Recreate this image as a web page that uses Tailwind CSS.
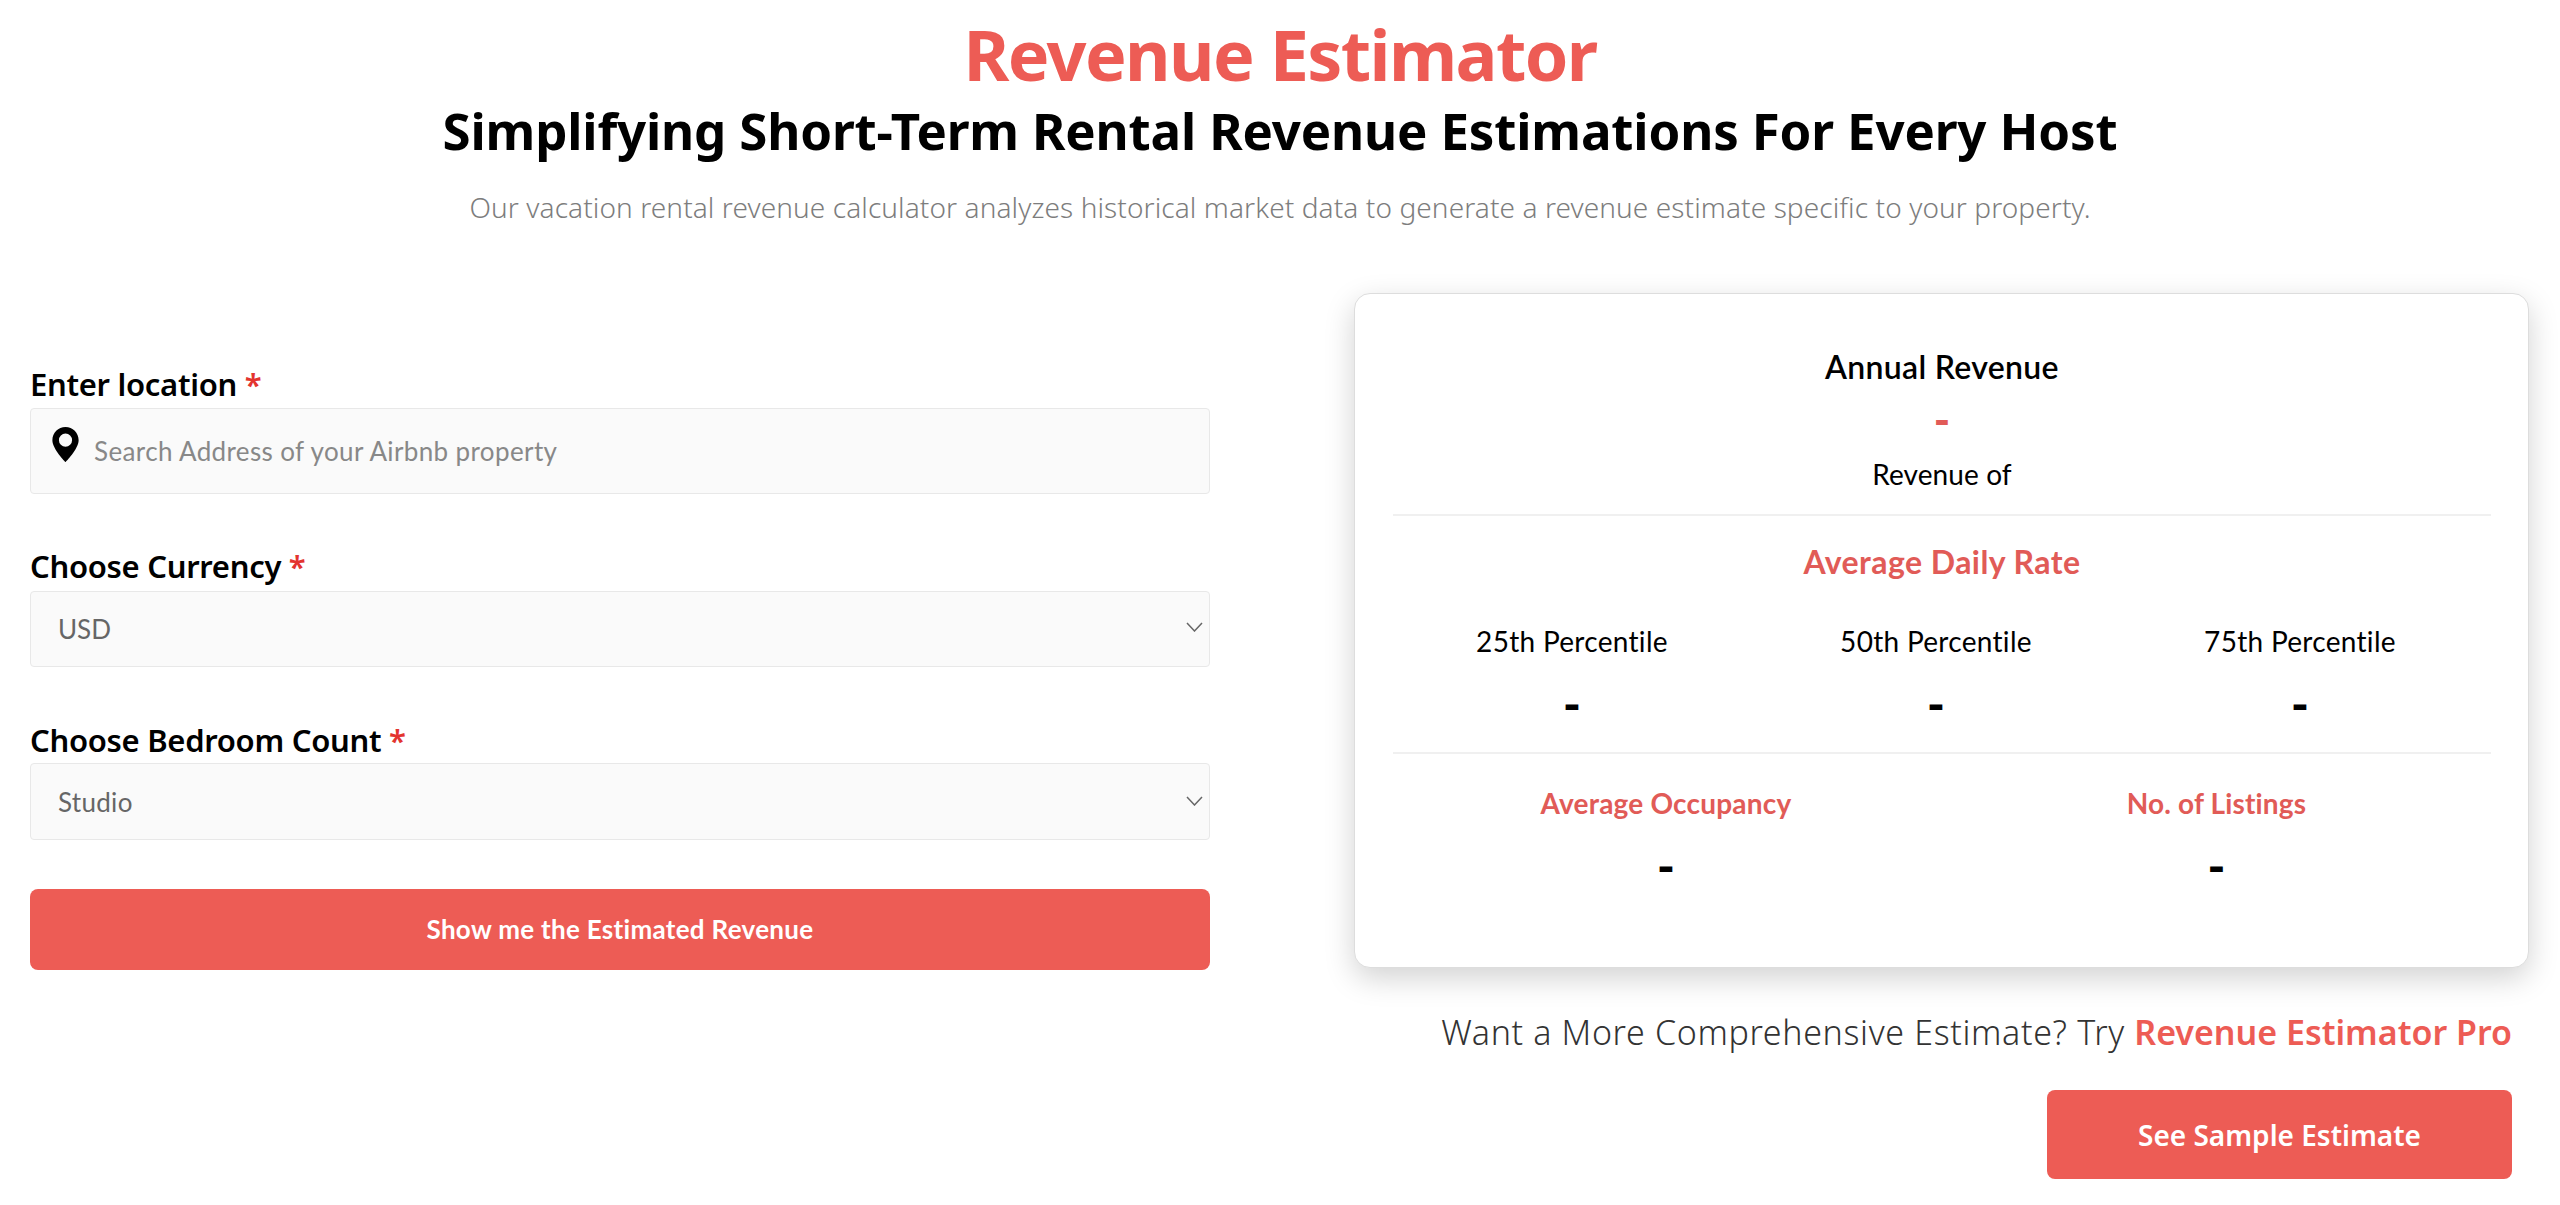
<!doctype html>
<html lang="en">
  <head>
    <meta charset="UTF-8" />
    <meta name="viewport" content="width=device-width, initial-scale=1.0" />
    <title>Revenue Estimator</title>
    <script src="https://cdn.jsdelivr.net/npm/@tailwindcss/browser@4"></script>
  </head>
  <body class="bg-white font-['Lato',sans-serif] [font-variant-ligatures:none]">
    <!-- Header -->
    <header class="pt-[18px] text-center">
      <h1 class="text-[70px] leading-[72px] tracking-[-1.6px] font-bold text-[#ed5c55] font-['Noto_Sans',sans-serif]">Revenue Estimator</h1>
      <h2 class="mt-[9px] text-[51px] leading-[62px] tracking-[-0.15px] font-bold text-black font-['Noto_Sans',sans-serif]">Simplifying Short-Term Rental Revenue Estimations For Every Host</h2>
      <p class="mt-[26px] text-[28px] leading-[40px] tracking-[0.1px] text-[#7d7d7d] font-['Noto_Sans',sans-serif] font-light">Our vacation rental revenue calculator analyzes historical market data to generate a revenue estimate specific to your property.</p>
    </header>

    <main class="mt-[66px] flex justify-between pl-[30px] pr-[31px]">
      <!-- Form -->
      <form class="w-[1180px] pt-[71px]">
        <label class="block text-[31px] leading-[40px] tracking-[-0.3px] font-semibold text-black font-['Noto_Sans',sans-serif]">Enter location <span class="text-[#e3342f]">*</span></label>
        <div class="relative mt-[4px]">
          <svg class="absolute left-[22px] top-[19px] w-[27px] h-[35px]" viewBox="0 0 24 32">
            <path fill-rule="evenodd" fill="#000" d="M12 0C5.4 0 0 5.4 0 12c0 8 12 20 12 20s12-12 12-20C24 5.4 18.6 0 12 0zm0 6a6 6 0 1 1 0 12 6 6 0 0 1 0-12z" />
          </svg>
          <input type="text" placeholder="Search Address of your Airbnb property" class="block w-full h-[86px] pl-[63px] pr-4 bg-[#fafafa] border border-[#e8e8e8] rounded-[4px] text-[26px] tracking-[0.38px] placeholder:text-[#888888]" />
        </div>

        <label class="block mt-[52px] text-[31px] leading-[40px] tracking-[-0.3px] font-semibold text-black font-['Noto_Sans',sans-serif]">Choose Currency <span class="text-[#e3342f]">*</span></label>
        <div class="relative mt-[5px]">
          <select class="block w-full h-[76px] appearance-none pl-[27px] bg-[#fafafa] border border-[#e8e8e8] rounded-[4px] text-[26px] text-[#666666]">
            <option>USD</option>
          </select>
          <svg class="absolute right-[7px] top-[31px] w-[17px] h-[10px]" viewBox="0 0 17 10" fill="none" stroke="#666" stroke-width="1.5"><path d="M1 1l7.5 8L16 1" /></svg>
        </div>

        <label class="block mt-[53px] text-[31px] leading-[40px] tracking-[-0.3px] font-semibold text-black font-['Noto_Sans',sans-serif]">Choose Bedroom Count <span class="text-[#e3342f]">*</span></label>
        <div class="relative mt-[3px]">
          <select class="block w-full h-[77px] appearance-none pt-[2px] pl-[27px] bg-[#fafafa] border border-[#e8e8e8] rounded-[4px] text-[26px] tracking-[0.3px] text-[#666666]">
            <option>Studio</option>
          </select>
          <svg class="absolute right-[7px] top-[33px] w-[17px] h-[10px]" viewBox="0 0 17 10" fill="none" stroke="#666" stroke-width="1.5"><path d="M1 1l7.5 8L16 1" /></svg>
        </div>

        <button type="button" class="block w-full h-[81px] mt-[49px] bg-[#ed5c55] rounded-[8px] text-white text-[26px] tracking-[0.3px] font-bold">Show me the Estimated Revenue</button>
      </form>

      <!-- Results -->
      <section class="w-[1175px]">
        <div class="h-[675px] pt-[51px] pl-[38px] pr-[37px] bg-white border border-[#dddddd] rounded-[16px] shadow-[0_10px_30px_rgba(0,0,0,0.18)] text-center">
          <p class="text-[32px] leading-[44px] tracking-[0.3px] font-semibold text-black">Annual Revenue</p>
          <p class="mt-[8px] text-[44px] leading-[44px] font-black text-[#e15b57]">-</p>
          <p class="mt-[13px] text-[28px] leading-[40px] tracking-[0.1px] text-black">Revenue of</p>
          <div class="mt-[20px] h-[2px] bg-[#f0f0f0]"></div>

          <p class="mt-[24px] text-[32px] leading-[44px] tracking-[0.45px] font-bold text-[#e15b57]">Average Daily Rate</p>
          <div class="mt-[37px] ml-[-3px] grid grid-cols-3 w-[1092px]">
            <div>
              <p class="text-[28px] leading-[40px] tracking-[0.3px] text-black">25th Percentile</p>
              <p class="mt-[21px] text-[48px] leading-[44px] font-black text-black">-</p>
            </div>
            <div>
              <p class="text-[28px] leading-[40px] tracking-[0.3px] text-black">50th Percentile</p>
              <p class="mt-[21px] text-[48px] leading-[44px] font-black text-black">-</p>
            </div>
            <div>
              <p class="text-[28px] leading-[40px] tracking-[0.3px] text-black">75th Percentile</p>
              <p class="mt-[21px] text-[48px] leading-[44px] font-black text-black">-</p>
            </div>
          </div>
          <div class="mt-[26px] h-[2px] bg-[#f0f0f0]"></div>

          <div class="mt-[29px] grid grid-cols-2">
            <div class="pr-[3px]">
              <p class="text-[28px] leading-[40px] tracking-[0.2px] font-bold text-[#e15b57]">Average Occupancy</p>
              <p class="mt-[21px] text-[48px] leading-[44px] font-black text-black">-</p>
            </div>
            <div>
              <p class="text-[28px] leading-[40px] tracking-[0.15px] font-bold text-[#e15b57]">No. of Listings</p>
              <p class="mt-[21px] text-[48px] leading-[44px] font-black text-black">-</p>
            </div>
          </div>
        </div>

        <p class="mt-[40px] pr-[17px] text-right text-[34px] leading-[48px] tracking-[0.65px] text-[#333333] font-['Noto_Sans',sans-serif] font-light">Want a More Comprehensive Estimate? Try <a href="#" class="font-semibold tracking-normal text-[#ed5c55]">Revenue Estimator Pro</a></p>
        <div class="mt-[34px] pr-[17px] flex justify-end">
          <button type="button" class="w-[465px] h-[89px] bg-[#ed5c55] rounded-[8px] text-white text-[28px] font-semibold font-['Noto_Sans',sans-serif]">See Sample Estimate</button>
        </div>
      </section>
    </main>
  </body>
</html>
